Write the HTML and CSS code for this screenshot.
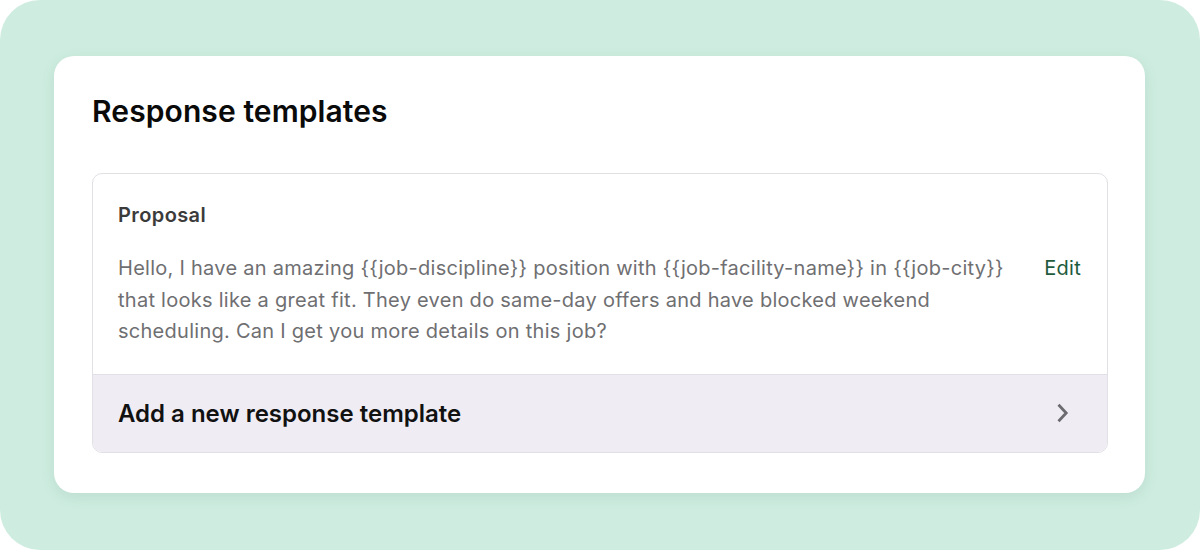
FILE: index.html
```html
<!DOCTYPE html>
<html>
<head>
<meta charset="utf-8">
<link rel="stylesheet" href="styles.css">
</head>
<body>
<div class="stage">
  <div class="card">
    <h1 class="title">Response templates</h1>
    <div class="box">
      <div class="template">
        <div class="template-name">Proposal</div>
        <div class="template-row">
          <p class="template-text">Hello, I have an amazing {{job-discipline}} position with {{job-facility-name}} in {{job-city}} that looks like a great fit. They even do same-day offers and have blocked weekend scheduling. Can I get you more details on this job?</p>
          <a class="edit">Edit</a>
        </div>
      </div>
      <div class="add-row">
        <span class="add-label">Add a new response template</span>
        <svg class="chev" width="14" height="20" viewBox="0 0 14 20"><path d="M2.5 1.8 L10.2 10 L2.5 18.2" fill="none" stroke="#6b6b70" stroke-width="2.8"/></svg>
      </div>
    </div>
  </div>
</div>
</body>
</html>
```
FILE: styles.css
```css
* { box-sizing: border-box; }
html, body { margin: 0; padding: 0; background: #fff; }
body { font-family: Inter, "Noto Sans", sans-serif; }
.stage {
  width: 1200px;
  height: 550px;
  background: #ceede0;
  border-radius: 40px;
  padding: 56px 55px 57px 54px;
}
.card {
  background: #fff;
  border-radius: 20px;
  height: 437px;
  padding: 38px 37px 40px 38px;
  box-shadow: 0 4px 14px rgba(60, 110, 90, 0.12);
}
.title {
  margin: 0;
  font-size: 30px;
  font-weight: 600;
  color: #0a0a0a;
  line-height: 34px;
  letter-spacing: 0.1px;
}
.box {
  margin-top: 45px;
  border: 1px solid #e0e0e5;
  border-radius: 10px;
  overflow: hidden;
}
.template {
  padding: 29px 26px 26px 25px;
  border-bottom: 1px solid #e0e0e5;
}
.template-name {
  font-size: 20px;
  font-weight: 600;
  color: #3b3b3b;
  line-height: 24px;
  letter-spacing: 0.4px;
}
.template-row {
  display: flex;
  align-items: flex-start;
  margin-top: 26px;
}
.template-text {
  margin: 0;
  flex: 0 0 895px;
  font-size: 20px;
  line-height: 31.5px;
  letter-spacing: 0.27px;
  color: #6f6f72;
}
.edit {
  margin-left: auto;
  font-size: 20px;
  line-height: 31.5px;
  letter-spacing: 0.3px;
  color: #1f5b3d;
}
.add-row {
  background: #efecf3;
  height: 77px;
  display: flex;
  align-items: center;
  justify-content: space-between;
  padding: 0 37px 0 25px;
}
.add-label {
  font-size: 24px;
  font-weight: 600;
  color: #111;
}
.chev { display: block; }
```
